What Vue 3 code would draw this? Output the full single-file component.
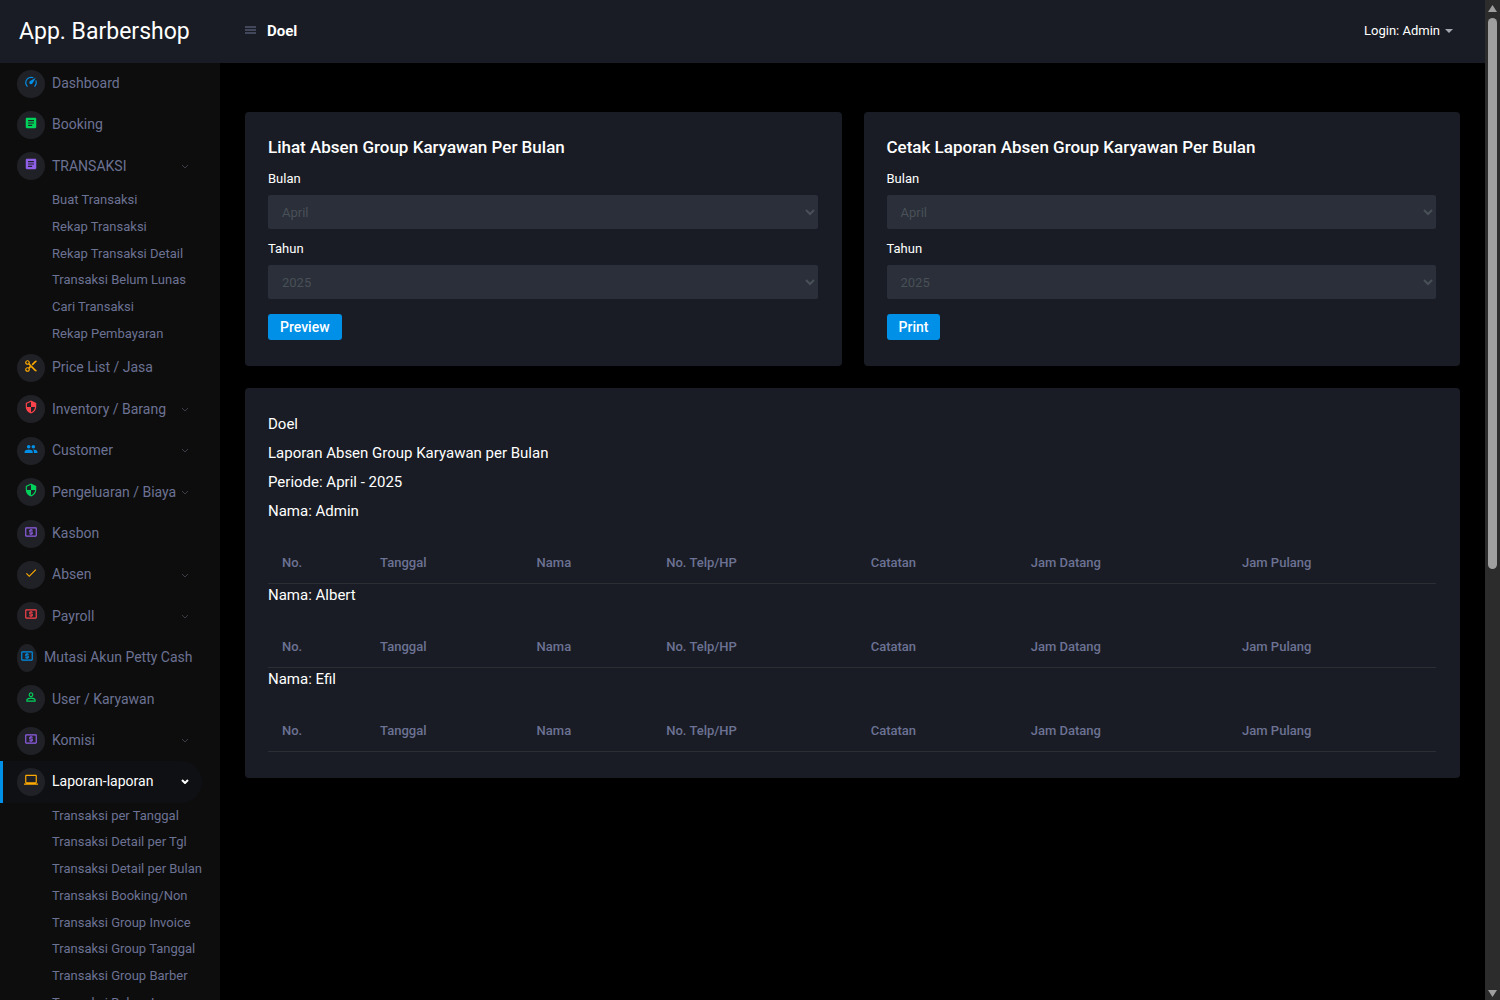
<script setup>
import { ref } from 'vue'

const icons = {
  gauge: 'M12,16A3,3 0 0,1 9,13C9,11.88 9.61,10.9 10.5,10.39L20.21,4.77L14.68,14.35C14.18,15.33 13.17,16 12,16M12,3C13.81,3 15.5,3.5 16.97,4.32L14.87,5.53C14,5.19 13,5 12,5A8,8 0 0,0 4,13C4,15.21 4.89,17.21 6.34,18.65H6.35C6.74,19.04 6.74,19.67 6.35,20.06C5.96,20.45 5.32,20.45 4.93,20.07V20.07C3.12,18.26 2,15.76 2,13A10,10 0 0,1 12,3M22,13C22,15.76 20.88,18.26 19.07,20.07V20.07C18.68,20.45 18.05,20.45 17.66,20.06C17.27,19.67 17.27,19.04 17.66,18.65V18.65C19.11,17.2 20,15.21 20,13C20,12 19.81,11 19.46,10.1L20.67,8C21.5,9.5 22,11.18 22,13Z',
  note: 'M19 3H5c-1.1 0-2 .9-2 2v14c0 1.1.9 2 2 2h14c1.1 0 2-.9 2-2V5c0-1.1-.9-2-2-2zm-5 14H7v-2h7v2zm3-4H7v-2h10v2zm0-4H7V7h10v2z',
  cut: 'M9.64 7.64c.23-.5.36-1.05.36-1.64 0-2.21-1.79-4-4-4S2 3.79 2 6s1.79 4 4 4c.59 0 1.14-.13 1.64-.36L10 12l-2.36 2.36C7.14 14.13 6.59 14 6 14c-2.21 0-4 1.79-4 4s1.79 4 4 4 4-1.79 4-4c0-.59-.13-1.14-.36-1.64L12 14l7 7h3v-1L9.64 7.64zM6 8c-1.1 0-2-.89-2-2s.9-2 2-2 2 .89 2 2-.9 2-2 2zm0 12c-1.1 0-2-.89-2-2s.9-2 2-2 2 .89 2 2-.9 2-2 2zm6-7.5c-.28 0-.5-.22-.5-.5s.22-.5.5-.5.5.22.5.5-.22.5-.5.5zM19 3l-6 6 2 2 7-7V3z',
  shield: 'M12 1L3 5v6c0 5.55 3.84 10.74 9 12 5.16-1.26 9-6.45 9-12V5l-9-4zm0 10.99h7c-.53 4.12-3.28 7.79-7 8.94V12H5V6.3l7-3.11v8.8z',
  people: 'M16 11c1.66 0 2.99-1.34 2.99-3S17.66 5 16 5c-1.66 0-3 1.34-3 3s1.34 3 3 3zm-8 0c1.66 0 2.99-1.34 2.99-3S9.66 5 8 5C6.34 5 5 6.34 5 8s1.34 3 3 3zm0 2c-2.33 0-7 1.17-7 3.5V19h14v-2.5c0-2.33-4.67-3.5-7-3.5zm8 0c-.29 0-.62.02-.97.05 1.16.84 1.97 1.97 1.97 3.45V19h6v-2.5c0-2.33-4.67-3.5-7-3.5z',
  cash: 'M11 17h2v-1h1c.55 0 1-.45 1-1v-3c0-.55-.45-1-1-1h-3v-1h4V8h-2V7h-2v1h-1c-.55 0-1 .45-1 1v3c0 .55.45 1 1 1h3v1H9v2h2v1zm9-13H4c-1.11 0-1.99.89-1.99 2L2 18c0 1.11.89 2 2 2h16c1.11 0 2-.89 2-2V6c0-1.11-.89-2-2-2zm0 14H4V6h16v12z',
  check: 'M9 16.17L4.83 12l-1.42 1.41L9 19 21 7l-1.41-1.41z',
  person: 'M12 5.9c1.16 0 2.1.94 2.1 2.1s-.94 2.1-2.1 2.1S9.9 9.16 9.9 8s.94-2.1 2.1-2.1m0 9c2.97 0 6.1 1.46 6.1 2.1v1.1H5.9V17c0-.64 3.13-2.1 6.1-2.1M12 4C9.79 4 8 5.79 8 8s1.79 4 4 4 4-1.79 4-4-1.79-4-4-4zm0 9c-2.67 0-8 1.34-8 4v3h16v-3c0-2.66-5.33-4-8-4z',
  laptop: 'M20 18c1.1 0 1.99-.9 1.99-2L22 5c0-1.1-.9-2-2-2H4c-1.1 0-2 .9-2 2v11c0 1.1.9 2 2 2H0v2h24v-2h-4zM4 5h16v11H4V5z',
}

const menu = [
  { label: 'Dashboard', icon: 'gauge', tone: 'blue' },
  { label: 'Booking', icon: 'note', tone: 'green' },
  {
    label: 'TRANSAKSI', icon: 'note', tone: 'purple', arrow: true,
    children: ['Buat Transaksi', 'Rekap Transaksi', 'Rekap Transaksi Detail', 'Transaksi Belum Lunas', 'Cari Transaksi', 'Rekap Pembayaran'],
  },
  { label: 'Price List / Jasa', icon: 'cut', tone: 'orange' },
  { label: 'Inventory / Barang', icon: 'shield', tone: 'red', arrow: true },
  { label: 'Customer', icon: 'people', tone: 'blue', arrow: true },
  { label: 'Pengeluaran / Biaya', icon: 'shield', tone: 'green', arrow: true },
  { label: 'Kasbon', icon: 'cash', tone: 'purple' },
  { label: 'Absen', icon: 'check', tone: 'orange', arrow: true },
  { label: 'Payroll', icon: 'cash', tone: 'red', arrow: true },
  { label: 'Mutasi Akun Petty Cash', icon: 'cash', tone: 'blue', narrow: true },
  { label: 'User / Karyawan', icon: 'person', tone: 'green' },
  { label: 'Komisi', icon: 'cash', tone: 'purple', arrow: true },
  {
    label: 'Laporan-laporan', icon: 'laptop', tone: 'orange', arrow: true, active: true,
    children: ['Transaksi per Tanggal', 'Transaksi Detail per Tgl', 'Transaksi Detail per Bulan', 'Transaksi Booking/Non', 'Transaksi Group Invoice', 'Transaksi Group Tanggal', 'Transaksi Group Barber', 'Transaksi Belum Lunas'],
  },
]

const forms = [
  { id: 'lihat', title: 'Lihat Absen Group Karyawan Per Bulan', action: 'Preview' },
  { id: 'cetak', title: 'Cetak Laporan Absen Group Karyawan Per Bulan', action: 'Print' },
]
const months = ['Januari', 'Februari', 'Maret', 'April', 'Mei', 'Juni', 'Juli', 'Agustus', 'September', 'Oktober', 'November', 'Desember']
const years = ['2023', '2024', '2025']
const month = ref('April')
const year = ref('2025')

const employees = ['Admin', 'Albert', 'Efil']
const columns = [
  { label: 'No.', cls: 'c-no' },
  { label: 'Tanggal', cls: 'c-date' },
  { label: 'Nama', cls: 'c-name' },
  { label: 'No. Telp/HP', cls: 'c-phone' },
  { label: 'Catatan', cls: 'c-note' },
  { label: 'Jam Datang', cls: 'c-in' },
  { label: 'Jam Pulang', cls: 'c-out' },
]
</script>

<template>
  <div class="shell">
    <div class="app">
      <header class="topbar">
        <a class="brand" href="#">App. Barbershop</a>
        <button class="burger" type="button" aria-label="Menu">
          <svg viewBox="0 0 11 8"><path d="M0 1h11M0 4h11M0 7h11" /></svg>
        </button>
        <strong class="shop">Doel</strong>
        <button class="login" type="button">Login: Admin<span class="caret"></span></button>
      </header>

      <div class="body">
        <nav class="sidebar">
          <ul class="menu">
            <li v-for="item in menu" :key="item.label">
              <a class="item" :class="{ active: item.active }" href="#">
                <span class="badge" :class="[item.tone, { narrow: item.narrow }]">
                  <svg viewBox="0 0 24 24"><path :d="icons[item.icon]" /></svg>
                </span>
                <span class="label">{{ item.label }}</span>
                <svg v-if="item.arrow" class="chevron" viewBox="0 0 8 5"><path d="M1 1l3 3 3-3" /></svg>
              </a>
              <ul v-if="item.children" class="sub">
                <li v-for="child in item.children" :key="child"><a href="#">{{ child }}</a></li>
              </ul>
            </li>
          </ul>
        </nav>

        <main class="content">
          <div class="forms">
            <form v-for="form in forms" :key="form.id" class="card" @submit.prevent>
              <h4>{{ form.title }}</h4>
              <div class="field">
                <label :for="form.id + '-bulan'">Bulan</label>
                <select :id="form.id + '-bulan'" v-model="month">
                  <option v-for="m in months" :key="m">{{ m }}</option>
                </select>
              </div>
              <div class="field">
                <label :for="form.id + '-tahun'">Tahun</label>
                <select :id="form.id + '-tahun'" v-model="year">
                  <option v-for="y in years" :key="y">{{ y }}</option>
                </select>
              </div>
              <button class="primary" type="submit">{{ form.action }}</button>
            </form>
          </div>

          <section class="card report">
            <p>Doel</p>
            <p>Laporan Absen Group Karyawan per Bulan</p>
            <p>Periode: April - 2025</p>
            <template v-for="name in employees" :key="name">
              <h5>Nama: {{ name }}</h5>
              <table>
                <thead>
                  <tr>
                    <th v-for="c in columns" :key="c.label" :class="c.cls" scope="col">{{ c.label }}</th>
                  </tr>
                </thead>
              </table>
            </template>
          </section>
        </main>
      </div>
    </div>

    <div class="scrollbar" aria-hidden="true">
      <svg viewBox="0 0 9 7"><path d="M4.500 0L9 7H0z" /></svg>
      <div class="track"><div class="thumb"></div></div>
      <svg viewBox="0 0 9 7"><path d="M0 0h9L4.500 7z" /></svg>
    </div>
  </div>
</template>

<style>
body {
  background: #000;
}
</style>

<style scoped>
.shell {
  display: flex;
  height: 100vh;
  overflow: hidden;
  background: #000;
  color: #fff;
  font-family: Roboto, sans-serif;
  font-size: 13px;
}
ul {
  list-style: none;
  margin: 0;
  padding: 0;
}
a {
  color: inherit;
  text-decoration: none;
}
button {
  font: inherit;
  border: 0;
  background: none;
  color: inherit;
  padding: 0;
}
.app {
  flex: 1;
  min-width: 0;
  display: flex;
  flex-direction: column;
}
.topbar {
  flex: none;
  display: flex;
  align-items: center;
  height: 63px;
  background: #191c24;
}
.brand {
  box-sizing: border-box;
  width: 245px;
  padding-left: 19px;
  font-size: 23px;
  line-height: 28px;
}
.burger {
  display: flex;
  margin-right: 11px;
  padding-bottom: 3px;
}
.burger svg {
  width: 11px;
  height: 8px;
  fill: none;
  stroke: #6c7293;
}
.shop {
  padding-bottom: 2px;
  font-size: 15px;
  font-weight: 700;
}
.login {
  display: flex;
  align-items: center;
  gap: 5px;
  margin-left: auto;
  padding: 0 32px 2px 0;
}
.caret {
  border: 4px solid transparent;
  border-top-color: #a4a7b0;
  border-bottom: 0;
}
.body {
  flex: 1;
  min-height: 0;
  display: flex;
}
.sidebar {
  flex: none;
  width: 220px;
  overflow: hidden;
  background: #0d0d0d;
  color: #6c7293;
}
.item {
  display: flex;
  align-items: center;
  box-sizing: border-box;
  width: 202px;
  padding: 0 13px 0 14px;
  border-left: 3px solid transparent;
  border-radius: 0 100px 100px 0;
  font-size: 14px;
  line-height: 2.957;
  white-space: nowrap;
}
.active {
  background: #0e1014;
  border-left-color: #0090e7;
  color: #fff;
}
.badge {
  flex: none;
  display: flex;
  justify-content: center;
  box-sizing: border-box;
  width: 28px;
  height: 28px;
  margin-right: 7px;
  padding-top: 5px;
  border-radius: 50%;
  background: #202126;
}
.badge svg {
  flex: none;
  width: 14px;
  height: 14px;
  fill: currentColor;
}
.narrow {
  width: 20px;
}
.blue { color: #0090e7; }
.green { color: #00d25b; }
.purple { color: #8f5fe8; }
.orange { color: #ffab00; }
.red { color: #fc424a; }
.chevron {
  width: 8px;
  height: 5px;
  margin-left: auto;
  fill: none;
  stroke: #3a3c46;
}
.active .chevron {
  stroke: #fff;
  stroke-width: 2;
}
.sub {
  padding-left: 52px;
  font-size: 13px;
  line-height: 2.055;
  white-space: nowrap;
}
.sub a {
  display: block;
}
.content {
  flex: 1;
  min-width: 0;
  padding: 49px 25px 25px;
}
.forms {
  display: grid;
  grid-template-columns: 1fr 1fr;
  gap: 22px;
  margin-bottom: 22px;
}
.card {
  padding: 23px 24px 26px 23px;
  border-radius: 4px;
  background: #191c24;
}
h4 {
  margin: 0 0 10px;
  font-size: 17px;
  line-height: 24px;
  font-weight: 500;
}
.field {
  margin-bottom: 10px;
}
.field label {
  display: block;
  margin-bottom: 6px;
  line-height: 20px;
}
select {
  display: block;
  width: 100%;
  height: 34px;
  padding: 0 10px;
  border: 0;
  border-radius: 2px;
  background: #2a2f39;
  color: #495057;
  font: inherit;
}
.primary {
  display: block;
  height: 26px;
  margin-top: 15px;
  padding: 0 12px;
  border-radius: 3px;
  background: #0090e7;
  font-size: 14px;
  font-weight: 500;
}
.report {
  padding-top: 25px;
}
p,
h5 {
  margin: 0 0 7px;
  font-size: 15px;
  line-height: 22px;
  font-weight: 400;
}
h5 {
  margin-bottom: 20px;
}
table {
  width: 100%;
  table-layout: fixed;
  border-collapse: separate;
  border-spacing: 0;
}
th {
  box-sizing: border-box;
  height: 42px;
  padding: 0 14px;
  border-bottom: 1px solid #2c2e33;
  color: #6c7293;
  font-weight: 500;
  text-align: left;
}
.c-no { width: 8.4%; }
.c-date { width: 13.4%; }
.c-name { width: 11.1%; }
.c-phone { width: 17.5%; }
.c-note { width: 13.7%; }
.c-in { width: 18.1%; }
.c-out { width: 17.8%; }
.scrollbar {
  flex: none;
  display: flex;
  flex-direction: column;
  align-items: center;
  box-sizing: border-box;
  width: 15px;
  padding: 5px 0 3px;
  background: #2c2c2c;
}
.scrollbar svg {
  width: 9px;
  height: 7px;
  fill: #9f9f9f;
}
.track {
  flex: 1;
  width: 9px;
  margin: 6px 0;
}
.thumb {
  height: 57%;
  border-radius: 5px;
  background: #9f9f9f;
}
</style>
